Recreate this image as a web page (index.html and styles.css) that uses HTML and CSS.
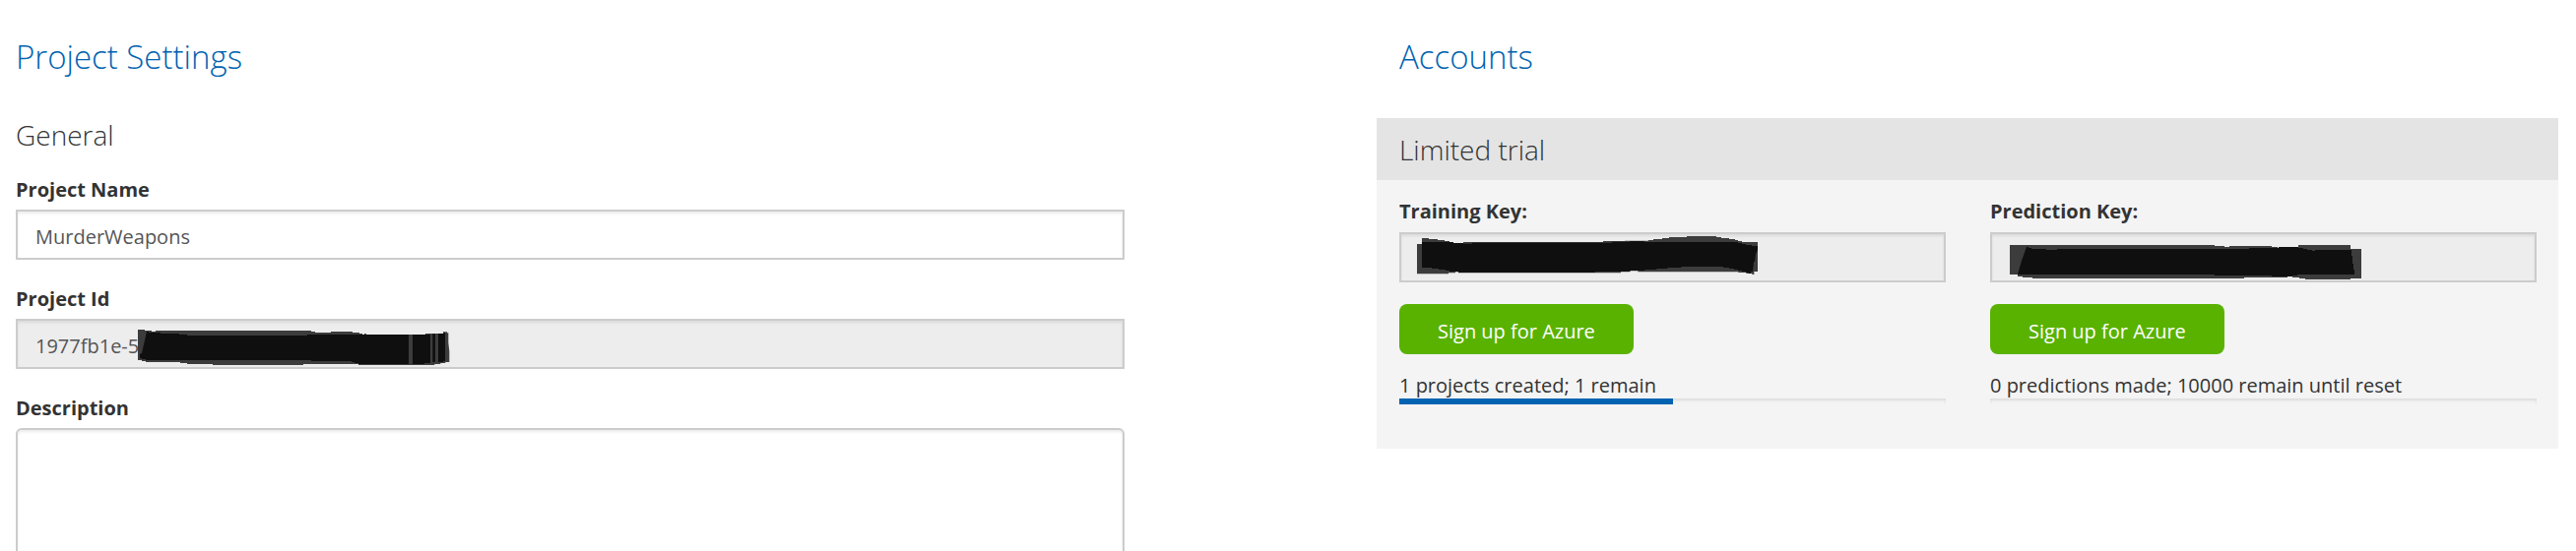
FILE: index.html
```html
<!DOCTYPE html>
<html lang="en">
<head>
<meta charset="utf-8">
<title>Project Settings</title>
<link rel="stylesheet" href="styles.css">
</head>
<body>
<main class="page">
  <section class="settings">
    <h1 class="title">Project Settings</h1>
    <h2 class="subtitle">General</h2>
    <div class="group">
      <label class="label" for="name">Project Name</label>
      <input class="input" id="name" type="text" value="MurderWeapons">
    </div>
    <div class="group">
      <label class="label" for="pid">Project Id</label>
      <div class="field">
        <input class="input" id="pid" type="text" value="1977fb1e-5" readonly>
        <svg class="mask mask-id" viewBox="120 69 954 117" aria-hidden="true">
          <path fill="#3c3c3c" d="M120 75h21v3h21v3h12v-3h474v3h12v3h48v-3h66v3h21v3h9v3h192v-3h54v-5h12v3h4v30l3 26v33h-12v3h-15v3h-18v3H792v-3h-168v3H348v-3h-78v-3h-21v-3H144v-3h-12v-3h-12z"/>
          <path fill="#0f0f0f" d="M147 81h6v3h36v3h57v3h24v3h366v-3h174v-2h6v2h129v90H792v-3h-12v-3h-9v-3H648v-3H144v-3h-12v-3h-6v-12l6-3z M957 90h54v87h-18v3h-36z M1018 88h8v86h-8z M1035 87h18v-3h3v87h-6v3h-15z"/>
        </svg>
      </div>
    </div>
    <div class="group">
      <label class="label" for="desc">Description</label>
      <textarea class="input area" id="desc" rows="6"></textarea>
    </div>
  </section>

  <section class="accounts">
    <h1 class="title inset">Accounts</h1>
    <div class="panel">
      <h2 class="panel-head">Limited trial</h2>
      <div class="keys">
        <div class="key">
          <label class="label" for="train">Training Key:</label>
          <div class="field">
            <input class="input" id="train" type="text" readonly>
            <svg class="mask mask-train" viewBox="117 57 1038 123" aria-hidden="true">
              <path fill="#3c3c3c" d="M117 84h15V66h21v3h27v3h21v3h15v3h12v3h30v-3h426v-3h66v-1h72v-2h15v-3h27v-3h21v-3h54v-3h90v3h15v3h24v3h18v3h9v3h12v3h57v90h-20v9h-6v-3h-18v-3h-24v-2H790v-3h-24v3h-28v3H243v-3h-9v3h-21v3h-96z"/>
              <path fill="#0f0f0f" d="M132 78h96v3h30v2h27v-3h426v-3h54v-2h45v3h285v3h12v3h12v3h18v3h18v12l-6 12-3 24h-3l-3 30h-6v6h-6v-3h-9v-3h-12v-3h-12v-3h-12v-3h-15v-3h-18v-3H922v3h-42v3h-33v3h-36v3h-45v3H660v3H243v-3h-27v-3h-12v-3h-21v-3h-21v-3h-30z"/>
            </svg>
          </div>
          <button class="signup" type="button">Sign up for Azure</button>
          <p class="usage" id="use-train">1 projects created; 1 remain</p>
          <div class="bar" role="progressbar" aria-labelledby="use-train" aria-valuenow="50"><div class="fill" style="width: 50%"></div></div>
        </div>
        <div class="key">
          <label class="label" for="predict">Prediction Key:</label>
          <div class="field">
            <input class="input" id="predict" type="text" readonly>
            <svg class="mask mask-predict" viewBox="123 87 1071 105" aria-hidden="true">
              <path fill="#3c3c3c" d="M123 87h624v3h30v3h15v-3h129v3h18v3h9v-3h54v-6h159v12h33v90h-33v3h-138v-3h-18v-3h-21v-3h-15v3H837v3H192v-3h-30v-3h-15v-6h-24z"/>
              <path fill="#0f0f0f" d="M174 93h6v3h9v3h45v3h33v-3h585v-3h90v-3h60v3h15v3h12v3h15v3h9v-3h111v18h3v24h3v18h3v15h-174v3h-15v3h-63v-3H747v-3H147l12-42z"/>
            </svg>
          </div>
          <button class="signup" type="button">Sign up for Azure</button>
          <p class="usage" id="use-predict">0 predictions made; 10000 remain until reset</p>
          <div class="bar" role="progressbar" aria-labelledby="use-predict" aria-valuenow="0"><div class="fill" style="width: 0%"></div></div>
        </div>
      </div>
    </div>
  </section>
</main>
</body>
</html>
```
FILE: styles.css
```css
* {
  box-sizing: border-box;
}

body {
  margin: 0;
  overflow-y: hidden;
  background: #fff;
  color: #333;
  font: 400 20px/28px "Open Sans", "Noto Sans", sans-serif;
}

.page {
  display: grid;
  grid-template-columns: 1126fr 1200fr;
  column-gap: 256px;
  padding: 34px 18px 0 16px;
}

.title {
  margin: 0 0 35px;
  color: #0063b1;
  font-size: 33px;
  font-weight: 300;
  line-height: 48px;
}

.title.inset {
  margin-bottom: 38px;
  padding-left: 23px;
}

.subtitle,
.panel-head {
  margin: 0 0 22px;
  font-size: 28px;
  font-weight: 300;
  line-height: 40px;
}

.group {
  margin-bottom: 26px;
}

.label {
  display: block;
  margin-bottom: 6px;
  font-size: 20px;
  font-weight: 700;
}

.field {
  position: relative;
}

.input {
  display: block;
  width: 100%;
  height: 51px;
  padding: 4px 18px 0;
  border: 2px solid #ccc;
  border-radius: 0;
  outline: 0;
  background: #fff;
  box-shadow: inset 0 2px 3px rgba(0, 0, 0, 0.08);
  color: #555;
  font: inherit;
}

.input:read-only {
  background: #ededed;
}

.area {
  height: auto;
  padding: 12px 18px;
  border-radius: 6px;
  resize: none;
}

.mask {
  position: absolute;
  display: block;
}

.mask-id {
  top: 9px;
  left: 124px;
  width: 318px;
}

.mask-train {
  top: 3px;
  left: 18px;
  width: 346px;
}

.mask-predict {
  top: 13px;
  left: 20px;
  width: 357px;
}

.panel {
  background: #f4f4f4;
}

.panel-head {
  margin: 0;
  padding: 12px 23px 11px;
  background: #e4e4e4;
}

.keys {
  display: grid;
  grid-template-columns: 1fr 1fr;
  column-gap: 45px;
  padding: 18px 22px 45px 23px;
}

.keys .label {
  margin-bottom: 7px;
}

.signup {
  display: block;
  height: 51px;
  margin: 22px 0 18px;
  padding: 4px 39px 0;
  border: 0;
  border-radius: 8px;
  background: #59b200;
  color: #fff;
  font: inherit;
}

.usage {
  margin: 0 0 -1px;
}

.bar {
  height: 6px;
  background: #f4f4f4;
  box-shadow: inset 0 2px 3px rgba(0, 0, 0, 0.1);
}

.fill {
  height: 100%;
  background: #0063b1;
}
```
